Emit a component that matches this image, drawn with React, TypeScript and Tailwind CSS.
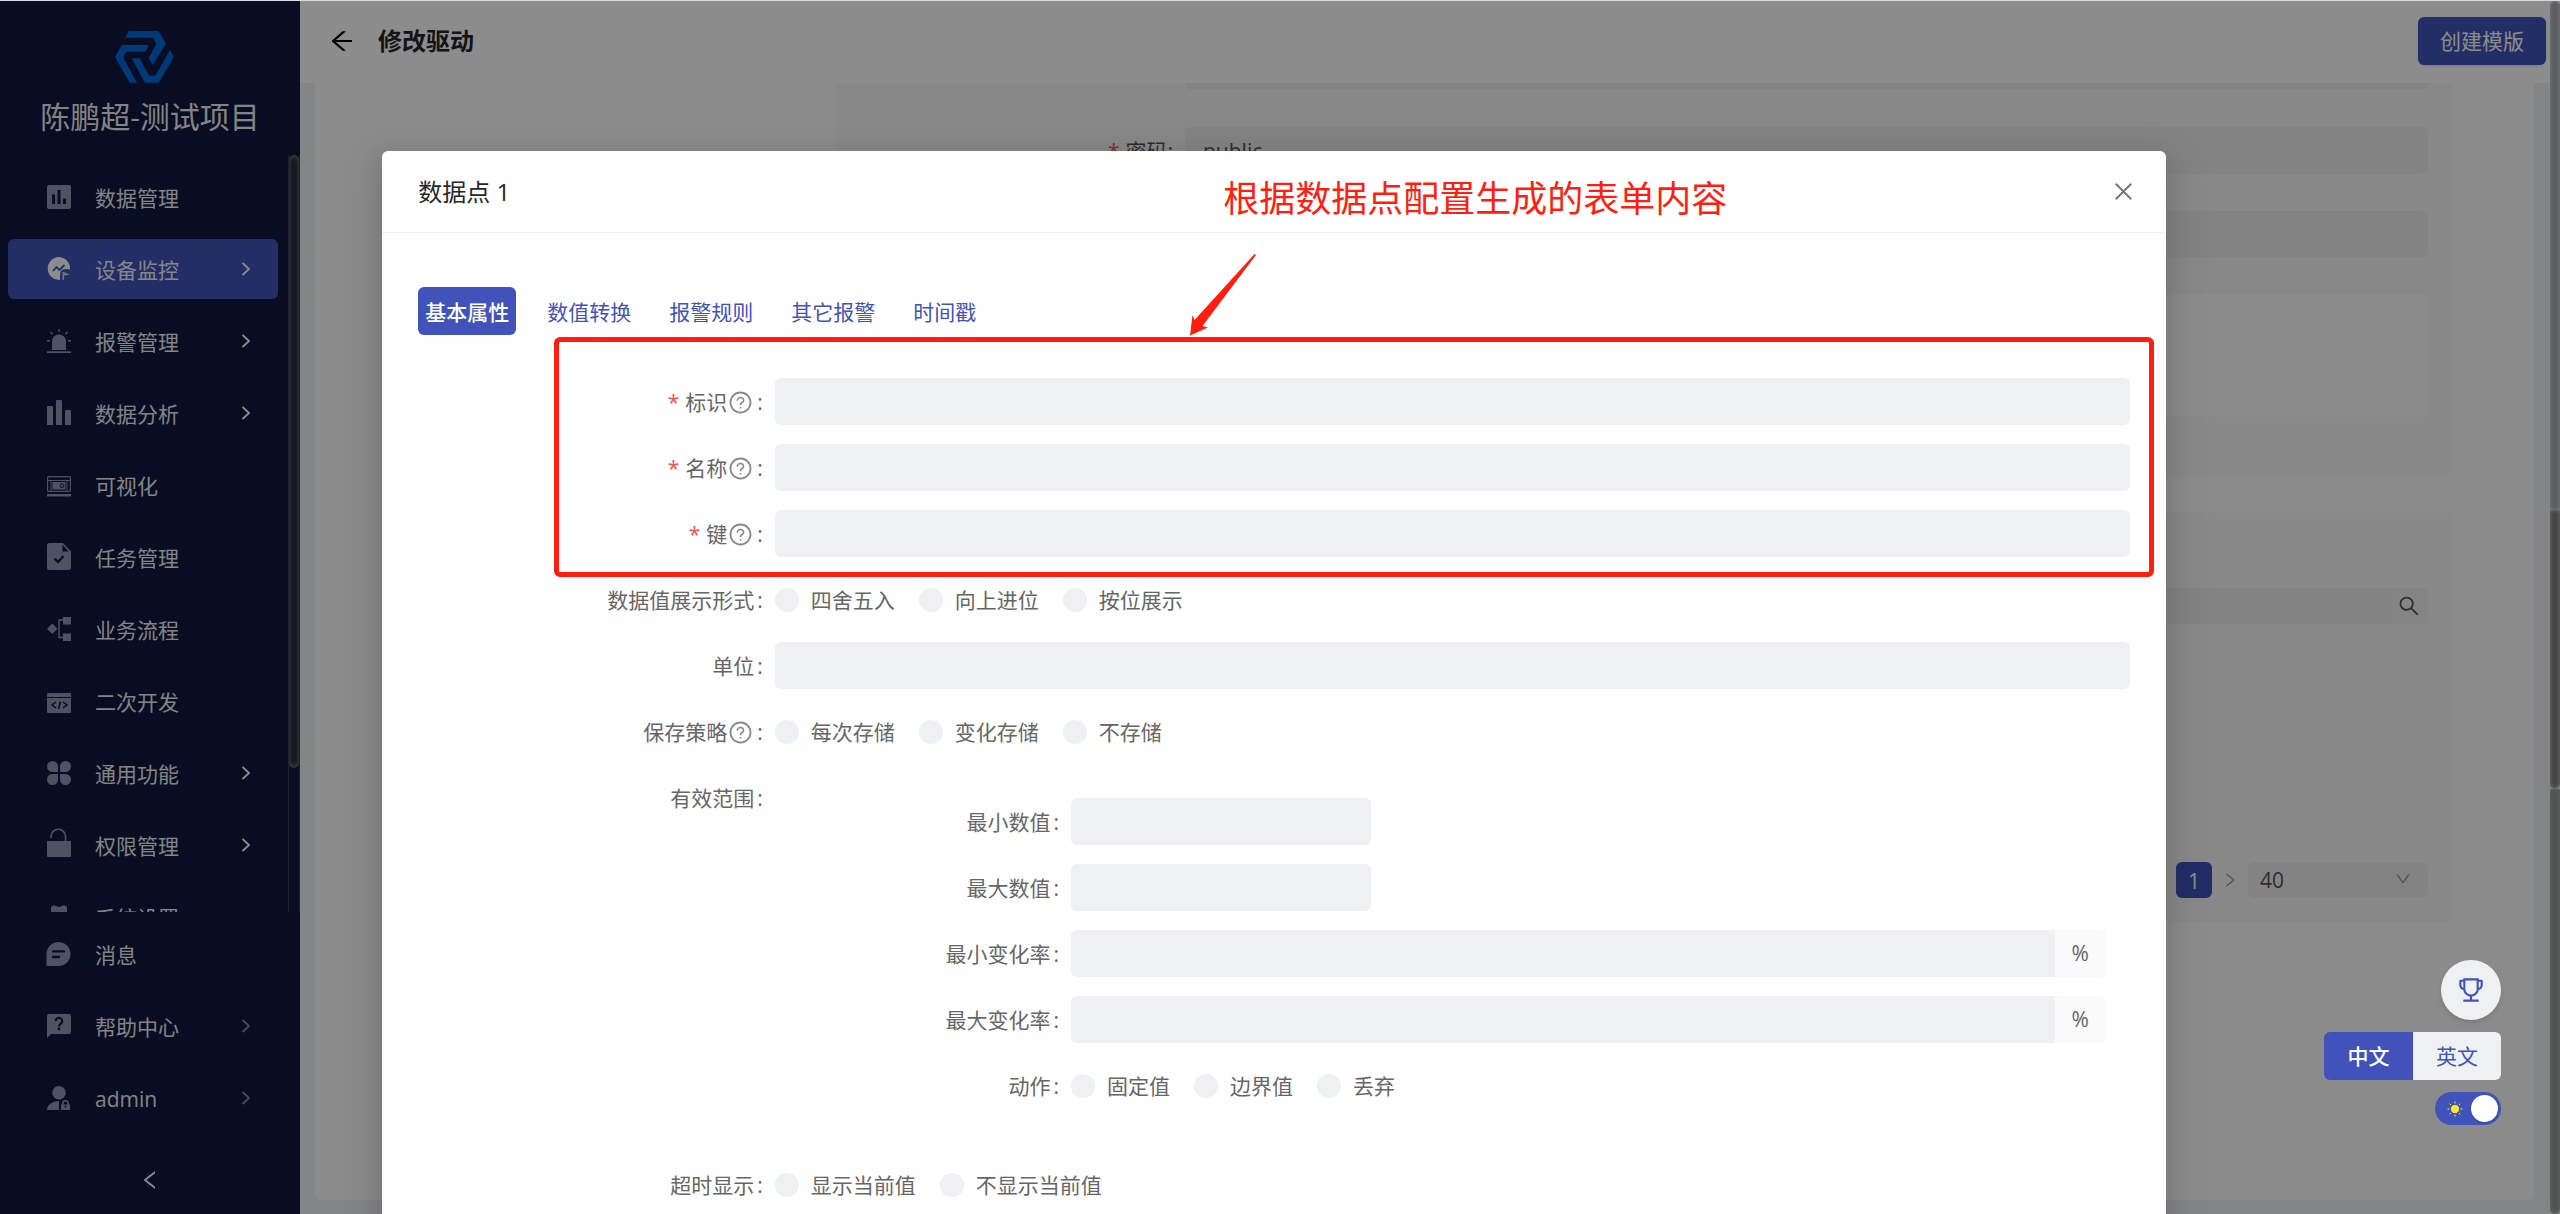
import React, { useState } from 'react';
import {
  AiOutlineArrowLeft,
  AiOutlineClose,
  AiOutlineDown,
  AiOutlineLeft,
  AiOutlineQuestionCircle,
  AiOutlineRight,
  AiOutlineSearch,
  AiOutlineTrophy,
} from 'react-icons/ai';

interface MenuEntry {
  label: string;
  icon: React.ReactNode;
  arrow?: boolean;
}

const mainMenu: MenuEntry[] = [
  {
    label: '数据管理',
    icon: (
      <path
        fillRule="evenodd"
        d="M2 0h20a2 2 0 0 1 2 2v20a2 2 0 0 1-2 2H2a2 2 0 0 1-2-2V2a2 2 0 0 1 2-2zM5 9.500v9.500h3V9.500zM10.500 5v14h3V5zM16 13.500V19h3v-5.500z"
      />
    ),
  },
  {
    label: '设备监控',
    arrow: true,
    icon: (
      <>
        <path d="M11.500 0A11.500 11.500 0 0 1 23 12.500c-3-.8-6-.8-8 .5-1.800 1.300-2 4-2 10A11.500 11.500 0 1 1 11.500 0z" />
        <path d="M6 14l3.500-4 3 3 5-5" fill="none" stroke="#4153ba" strokeWidth="1.800" />
        <path d="M15.500 15v8h1.600v-4.500l5.900-.8-5.900-2.700z" opacity=".75" />
      </>
    ),
  },
  {
    label: '报警管理',
    arrow: true,
    icon: (
      <>
        <path d="M5 21v-8.500a7 7 0 0 1 14 0V21zM0 22.200h24V24H0zM11.300 0h1.400v3h-1.400zM0 11h3v1.500H0zM21 11h3v1.500h-3z" />
        <path d="M3.500 3l2 2.200M20.500 3l-2 2.200" stroke="currentColor" strokeWidth="1.300" />
      </>
    ),
  },
  {
    label: '数据分析',
    arrow: true,
    icon: <path d="M0 6a1 1 0 0 1 1-1h4a1 1 0 0 1 1 1v18H0zM9 0a1 1 0 0 1 1-1h4a1 1 0 0 1 1 1v24H9zM18 10a1 1 0 0 1 1-1h4a1 1 0 0 1 1 1v14h-6z" />,
  },
  {
    label: '可视化',
    icon: (
      <>
        <rect x=".6" y="3.600" width="22.800" height="14.800" rx="1" fill="none" stroke="currentColor" strokeWidth="1.200" />
        <path d="M1 7.500h22" stroke="currentColor" strokeWidth="1" />
        <path d="M4 8v10M20 8v10" stroke="currentColor" strokeWidth="1" />
        <rect x="5.500" y="9" width="13" height="7.500" />
        <circle cx="15" cy="12.700" r="1.800" fill="none" stroke="#121940" strokeWidth="1" />
        <path d="M0 21h24v2.500H0z" />
      </>
    ),
  },
  {
    label: '任务管理',
    icon: (
      <>
        <path d="M2.500-2H16l8 8.500V22.500a2.500 2.500 0 0 1-2.500 2.500h-19A2.500 2.500 0 0 1 0 22.500V.5A2.500 2.500 0 0 1 2.500-2z" />
        <path d="M15.500-.5v7h6z" fill="#121940" />
        <path d="M7.500 13.500l3.500 3.500 5.500-6" fill="none" stroke="#121940" strokeWidth="2.400" />
      </>
    ),
  },
  {
    label: '业务流程',
    icon: (
      <>
        <path d="M5.200 6.500l5.300 5.300-5.300 5.300L0 11.800zM16 0h8v7.500h-8zM16 16.500h8V24h-8z" />
        <path d="M16 3h-4v17.500h4" fill="none" stroke="currentColor" strokeWidth="1.500" />
      </>
    ),
  },
  {
    label: '二次开发',
    icon: (
      <>
        <path d="M1 4h22a1 1 0 0 1 1 1v3H0V5a1 1 0 0 1 1-1zM0 9h24v14a1 1 0 0 1-1 1H1a1 1 0 0 1-1-1z" />
        <path d="M9 13l-4 3 4 3M16 13l4 3-4 3M13.500 12.500l-2 7.500" fill="none" stroke="#121940" strokeWidth="1.500" />
      </>
    ),
  },
  {
    label: '通用功能',
    arrow: true,
    icon: (
      <path d="M5.500 0A5.500 5.500 0 0 1 11 5.500V11H5.500a5.500 5.500 0 0 1 0-11zM18.500 0a5.500 5.500 0 0 1 0 11H13V5.500A5.500 5.500 0 0 1 18.500 0zM5.500 13H11v5.500A5.500 5.500 0 1 1 5.500 13zM13 13h5.500a5.500 5.500 0 1 1-5.500 5.500z" />
    ),
  },
  {
    label: '权限管理',
    arrow: true,
    icon: (
      <>
        <path d="M0 8h24v15a1 1 0 0 1-1 1H1a1 1 0 0 1-1-1z" />
        <path d="M4 5V3.500a7 7 0 0 1 14.500 0V8" fill="none" stroke="currentColor" strokeWidth="1.600" />
      </>
    ),
  },
  {
    label: '系统设置',
    icon: <path d="M4 3c0-2 2.500-3.200 4.500-2.200Q12 3 15.500.8C17.500-.2 20 1 20 3v4l3 5-3 5v3l-4 2-4-1-4 1-4-2v-3l-3-5 3-5z" />,
  },
];

const footMenu: MenuEntry[] = [
  {
    label: '消息',
    icon: (
      <path
        fillRule="evenodd"
        d="M11.500 0a12 12 0 1 1 0 24H-.5V12A12 12 0 0 1 11.500 0zM6 8.200a1 1 0 0 0 0 2.400h11a1 1 0 0 0 0-2.400zM6 13.800a1 1 0 0 0 0 2.400h6a1 1 0 0 0 0-2.400z"
      />
    ),
  },
  {
    label: '帮助中心',
    arrow: true,
    icon: (
      <>
        <path d="M2 0h20a2 2 0 0 1 2 2v16a2 2 0 0 1-2 2H4l-4 4V2a2 2 0 0 1 2-2z" />
        <path d="M8.800 7a3.200 3.200 0 1 1 5.200 2.500c-1.300 1-1.900 1.400-1.900 3" fill="none" stroke="#121940" strokeWidth="2.200" />
        <circle cx="12" cy="15" r="1.400" fill="#121940" />
      </>
    ),
  },
  {
    label: 'admin',
    arrow: true,
    icon: (
      <>
        <circle cx="12" cy="6.800" r="6.800" />
        <path d="M0 24c0-5 5-9 12-9v9z" />
        <path d="M14 18.500h9V24h-9z" />
        <path d="M15.800 19v-1.500a2.700 2.700 0 0 1 5.400 0V19" fill="none" stroke="currentColor" strokeWidth="1.600" />
        <circle cx="18.500" cy="20.500" r="1" fill="#121940" />
      </>
    ),
  },
];

const tabs = ['基本属性', '数值转换', '报警规则', '其它报警', '时间戳'];

function MenuItem({ item, active, dim }: { item: MenuEntry; active?: boolean; dim?: boolean }) {
  return (
    <li>
      <a
        href="#"
        className={`flex h-[60px] items-center rounded-md pl-[39px] pr-6 text-[21px] leading-8 text-white/95 ${active ? 'bg-[#4153ba]' : ''}`}
      >
        <svg viewBox="0 0 24 24" fill="currentColor" className={`size-6 shrink-0 overflow-visible ${active ? 'text-white' : 'text-[#9095b6]'}`}>
          {item.icon}
        </svg>
        <span className="ml-6 flex-1 pt-0.5">{item.label}</span>
        {item.arrow && (
          <svg viewBox="0 0 16 16" className={`size-4 ${dim ? 'text-[#8589a3]' : 'text-white'}`} fill="none" stroke="currentColor" strokeWidth="1.800">
            <path d="M4.500 2l6.500 6-6.500 6" />
          </svg>
        )}
      </a>
    </li>
  );
}

function Logo() {
  return (
    <svg viewBox="0 0 177 156" className="h-[52px] w-[59px]" fill="#006bda">
      <path d="M41 0h89l23 37-40 65-12-22 23-40-8-20H31z" />
      <path d="M20 42h81L91 62H34L24 79l42 76H44L0 78z" />
      <path d="M50 82h24l28 52h19l44-77 11 21-45 77H90z" />
    </svg>
  );
}

function Sidebar() {
  return (
    <aside className="flex w-[300px] shrink-0 flex-col bg-[#121940]">
      <div className="flex h-[154px] shrink-0 flex-col items-center pt-[30px] pr-3">
        <Logo />
        <h1 className="mt-3 pl-3 text-[30px] leading-[44px] text-white/95">陈鹏超-测试项目</h1>
      </div>
      <div className="flex min-h-0 flex-1">
        <ul className="flex-1 space-y-3 overflow-hidden pt-3 pr-2.5 pl-2">
          {mainMenu.map((item) => (
            <MenuItem key={item.label} item={item} active={item.label === '设备监控'} />
          ))}
        </ul>
        <div className="w-3 border-x border-[#363b5c]">
          <div className="h-[81%] rounded-full bg-[#1c1f2c] shadow-[inset_0_0_6px_rgba(255,255,255,0.5)]" />
        </div>
      </div>
      <ul className="space-y-3 pt-3 pr-[22px] pb-[18px] pl-2">
        {footMenu.map((item) => (
          <MenuItem key={item.label} item={item} dim />
        ))}
      </ul>
      <button type="button" aria-label="收起菜单" className="flex h-[68px] items-center justify-center text-white">
        <AiOutlineLeft size={24} />
      </button>
    </aside>
  );
}

function PageContent() {
  return (
    <div className="flex min-h-0 flex-1 flex-col bg-[#f0f2f5] pr-[26px] pb-[14px] pl-[15px]">
      <div className="flex-1 rounded-b-md bg-[#fdfdfd] pr-[82px] pl-[521px] text-[21px] leading-8 text-[#555]">
        {/* driver settings, scrolled under the header */}
        <section className="rounded-b-md bg-[#f8f8f8] pr-6 pb-[59px]">
          <div className="ml-[349px] h-[7px] rounded-b-md bg-[#eeeff0]" />
          <div className="mt-[37px] flex items-center">
            <label htmlFor="password" className="w-[349px] pr-3 text-right">
              <span className="mr-1.5 text-[#ff4d4f]">*</span>密码:
            </label>
            <input id="password" defaultValue="public" className="h-[47px] min-w-0 flex-1 rounded-md bg-[#eeeff0] px-[18px]" />
          </div>
          <div className="mt-[37px] ml-[349px] h-[47px] rounded-md bg-[#eeeff0]" />
          <div className="mt-9 ml-[349px] h-[123px] rounded-md bg-[#fdfdfd]" />
        </section>

        {/* data point list */}
        <section className="mt-[37px] rounded-md bg-[#f8f8f8] px-6 pt-[75px] pb-6">
          <div className="flex h-9">
            <input aria-label="搜索数据点" className="min-w-0 flex-1 rounded-l-md bg-[#eeeff0]" />
            <button type="button" aria-label="搜索" className="flex w-[38px] items-center justify-center rounded-r-md bg-[#f0f1f2] text-[#555]">
              <AiOutlineSearch size={24} />
            </button>
          </div>
          <div className="mt-[238px] flex items-center justify-end">
            <button type="button" className="size-9 rounded-md bg-[#4153ba] pt-0.5 text-white">
              1
            </button>
            <AiOutlineRight size={18} className="mx-[9px] text-[#999]" />
            <div className="relative">
              <select aria-label="每页条数" className="h-9 w-[180px] appearance-none rounded-md bg-[#eeeff0] px-3">
                <option>40</option>
              </select>
              <AiOutlineDown size={18} className="pointer-events-none absolute top-2 right-4 text-[#999]" />
            </div>
          </div>
        </section>
      </div>
    </div>
  );
}

interface RowProps {
  label: string;
  htmlFor?: string;
  required?: boolean;
  help?: boolean;
  children?: React.ReactNode;
}

function FormRow({ label, htmlFor, required, help, children }: RowProps) {
  return (
    <div className="mb-[18px] flex items-start">
      <label htmlFor={htmlFor} className="flex h-12 w-5/24 shrink-0 items-center justify-end pr-3 leading-8">
        {required && <span className="mr-1.5 text-[#ff4d4f]">*</span>}
        {label}
        {help && <AiOutlineQuestionCircle size={25} className="mx-px text-[#888]" />}
        <span className="ml-[3px]">:</span>
      </label>
      <div className="min-w-0 flex-1">{children}</div>
    </div>
  );
}

function TextField({ id, short }: { id: string; short?: boolean }) {
  return <input id={id} disabled className={`block h-[47px] rounded-md bg-[#eff0f2] px-4 ${short ? 'w-[300px]' : 'w-full'}`} />;
}

function PercentField({ id }: { id: string }) {
  return (
    <div className="flex h-[47px]">
      <input id={id} disabled className="min-w-0 flex-1 rounded-l-md bg-[#eff0f2] px-4" />
      <span className="flex w-[51px] items-center justify-center rounded-r-md bg-[#fafafa]">%</span>
    </div>
  );
}

function RadioGroup({ name, options }: { name: string; options: string[] }) {
  return (
    <div className="flex h-12 items-center gap-6 leading-8">
      {options.map((option) => (
        <label key={option} className="flex items-center gap-3">
          <input type="radio" name={name} disabled className="size-6 appearance-none rounded-full bg-[#eff0f2]" />
          {option}
        </label>
      ))}
    </div>
  );
}

function DataPointModal() {
  const [tab, setTab] = useState(tabs[0]);

  return (
    <div
      role="dialog"
      aria-label="数据点 1"
      className="relative w-[70%] rounded-md bg-white pb-9 text-[21px] text-[#666] shadow-[0_9px_24px_rgba(0,0,0,0.1),0_14px_42px_12px_rgba(0,0,0,0.08)]"
    >
      <header className="flex h-[82px] items-center justify-between border-b border-[#f0f0f0] pl-9">
        <h2 className="text-2xl text-[#262626]">数据点 1</h2>
        <button type="button" aria-label="关闭" className="flex h-full w-[84px] items-center justify-center text-[#777]">
          <AiOutlineClose size={25} />
        </button>
      </header>

      <div className="px-9 pt-[54px]">
        <nav className="flex gap-6">
          {tabs.map((t) => (
            <button
              key={t}
              type="button"
              onClick={() => setTab(t)}
              className={`h-12 rounded-md px-[7px] pt-0.5 leading-8 ${t === tab ? 'bg-[#4153ba] font-medium text-white' : 'text-[#4153ba]'}`}
            >
              {t}
            </button>
          ))}
        </nav>

        <form className="mt-[43px]">
          <FormRow label="标识" htmlFor="point-id" required help>
            <TextField id="point-id" />
          </FormRow>
          <FormRow label="名称" htmlFor="point-name" required help>
            <TextField id="point-name" />
          </FormRow>
          <FormRow label="键" htmlFor="point-key" required help>
            <TextField id="point-key" />
          </FormRow>
          <FormRow label="数据值展示形式">
            <RadioGroup name="display" options={['四舍五入', '向上进位', '按位展示']} />
          </FormRow>
          <FormRow label="单位" htmlFor="point-unit">
            <TextField id="point-unit" />
          </FormRow>
          <FormRow label="保存策略" help>
            <RadioGroup name="storage" options={['每次存储', '变化存储', '不存储']} />
          </FormRow>
          <FormRow label="有效范围">
            <div className="px-6 pt-6 pb-[15px]">
              <FormRow label="最小数值" htmlFor="min-value">
                <TextField id="min-value" short />
              </FormRow>
              <FormRow label="最大数值" htmlFor="max-value">
                <TextField id="max-value" short />
              </FormRow>
              <FormRow label="最小变化率" htmlFor="min-rate">
                <PercentField id="min-rate" />
              </FormRow>
              <FormRow label="最大变化率" htmlFor="max-rate">
                <PercentField id="max-rate" />
              </FormRow>
              <FormRow label="动作">
                <RadioGroup name="action" options={['固定值', '边界值', '丢弃']} />
              </FormRow>
            </div>
          </FormRow>
          <FormRow label="超时显示">
            <RadioGroup name="timeout" options={['显示当前值', '不显示当前值']} />
          </FormRow>
        </form>
      </div>

      {/* red callout drawn over the form */}
      <div className="pointer-events-none absolute top-[186px] right-3 left-[172px] h-[240px] rounded-md border-[5px] border-[#ff1e10]" />
      <p className="absolute top-6 left-[841px] text-4xl leading-[48px] text-[#ff1e10]">根据数据点配置生成的表单内容</p>
      <svg viewBox="0 0 66 82" className="absolute top-[103px] left-[808px] h-[82px] w-[66px]" fill="#ff1e10">
        <path d="M64.500 0l1.500 1-53.500 71 5.500 1.500L0 81.500 2.500 61l2 5z" />
      </svg>
    </div>
  );
}

function FloatingTools() {
  return (
    <div className="absolute right-[59px] bottom-[89px] flex flex-col items-end gap-3 text-[21px] leading-8">
      <button type="button" aria-label="奖杯" className="flex size-[60px] items-center justify-center rounded-full bg-[#eff0f2] text-[#4153ba] shadow-md">
        <AiOutlineTrophy size={30} />
      </button>
      <div className="flex h-12 overflow-hidden rounded-md">
        <button type="button" className="w-[89px] bg-[#4153ba] font-medium text-white">
          中文
        </button>
        <button type="button" className="w-[88px] bg-[#eff0f2] text-[#4153ba]">
          英文
        </button>
      </div>
      <button type="button" role="switch" aria-checked="true" aria-label="主题" className="flex h-[33px] w-[66px] items-center justify-between rounded-full bg-[#4153ba] pr-[3px] pl-3">
        <svg viewBox="0 0 16 16" className="size-4" fill="#fbeb25" stroke="#fbeb25" strokeWidth="1">
          <circle cx="8" cy="8" r="3.700" />
          <path d="M8 .5v2M8 13.500v2M.5 8h2M13.500 8h2M2.700 2.700l1.300 1.300M12 12l1.300 1.300M2.700 13.300L4 12M12 4l1.300-1.300" />
        </svg>
        <span className="size-[27px] rounded-full bg-white shadow" />
      </button>
    </div>
  );
}

export default function App() {
  return (
    <div className="relative h-screen overflow-hidden border-t border-[#d9dcdc] font-['Open_Sans','Noto_Sans_CJK_SC',sans-serif]">
      <div className="flex h-full">
        <Sidebar />
        <main className="flex min-w-0 flex-1 flex-col">
          <header className="flex h-[82px] shrink-0 items-center bg-white pr-[14px] pb-0.5 pl-7">
            <button type="button" aria-label="返回" className="text-black">
              <AiOutlineArrowLeft size={28} />
            </button>
            <h1 className="ml-[22px] flex-1 text-2xl font-bold text-[#262626]">修改驱动</h1>
            <button type="button" className="h-12 rounded-md bg-[#4153ba] px-[22px] text-[21px] leading-8 text-white shadow">
              创建模版
            </button>
          </header>
          <PageContent />
        </main>
      </div>

      <div className="absolute inset-0 flex items-start justify-center overflow-hidden bg-black/45 pt-[150px] pr-3">
        <DataPointModal />
      </div>

      <div className="absolute inset-y-0 right-0 flex w-2.5 flex-col">
        <div className="h-[42%] rounded-t-full bg-[#5c5d5f] shadow-[inset_0_0_4px_rgba(160,160,160,0.5)]" />
        <div className="h-[23%] rounded-b-full bg-[#444] shadow-[inset_0_0_4px_rgba(160,160,160,0.6)]" />
        <div className="flex-1 rounded-b-full bg-[#525453] shadow-[inset_0_0_4px_rgba(140,140,140,0.4)]" />
      </div>

      <FloatingTools />
    </div>
  );
}
